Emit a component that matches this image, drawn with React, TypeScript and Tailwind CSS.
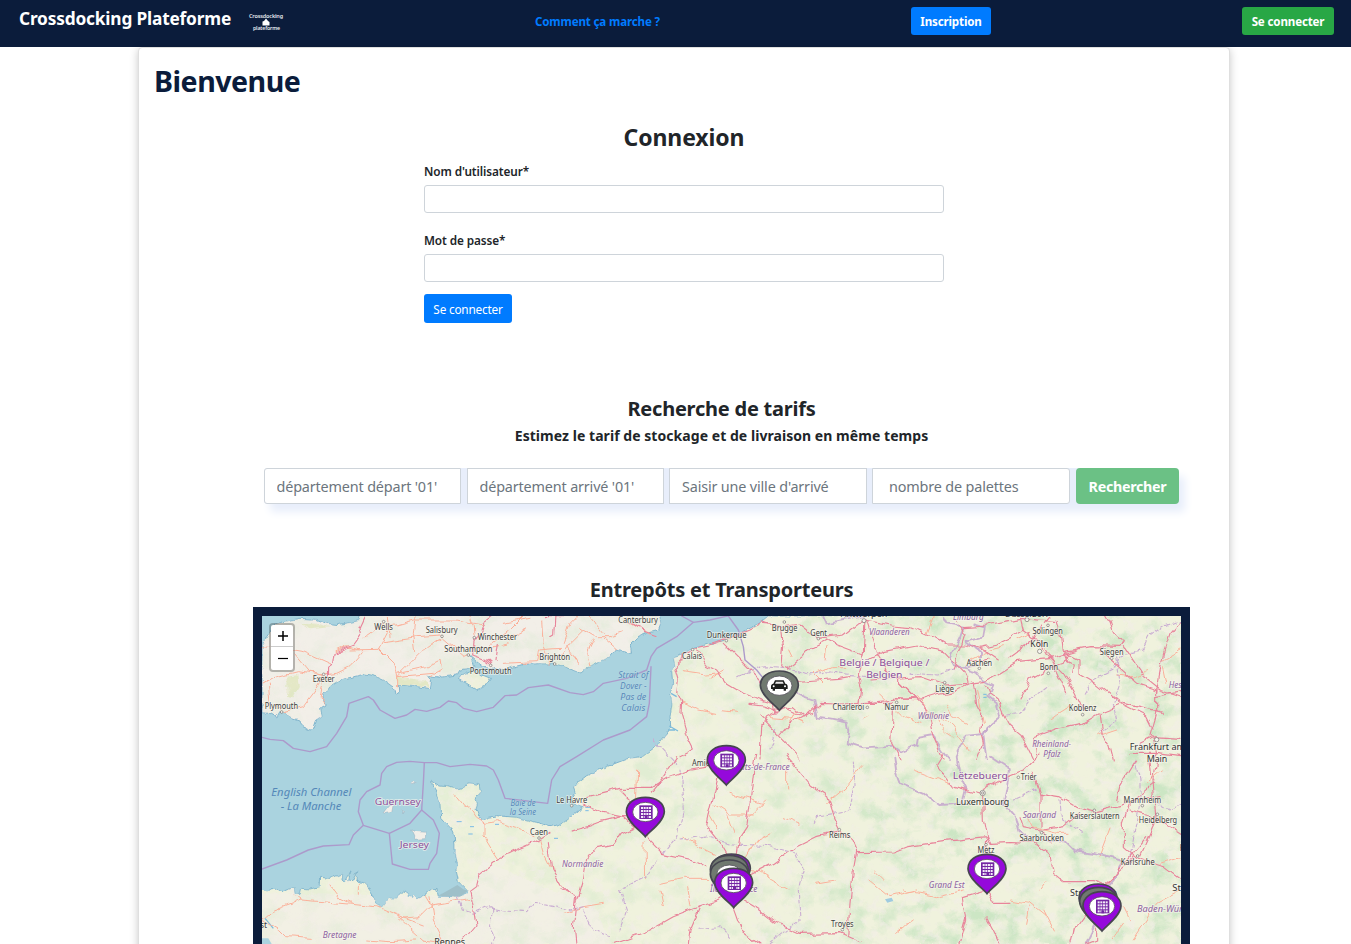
import React from "react";

const UK =
  "M36 225L60 190 78 160 110 153 150 145 200 148 230 160 262 164 300 158 326 152 330 138H1230L1232 160 1225 180 1190 190 1160 205 1140 225 1145 250 1096 240 1080 260 1050 275 1020 290 1005 296 990 309 960 297 930 285 905 282 870 281 820 283 780 294 740 300 722 296 700 290 680 275 660 257 672 290 650 296 630 300 620 315 570 322 545 318 530 322 545 330 541 356 510 351 445 345 446 372 438 375 435 355 400 330 370 316 345 312 290 325 270 332 240 350 228 368 218 372 225 405 212 412 216 440 200 450 190 478 180 480 155 468 147 450 120 441 104 428 90 424 80 442 60 430 36 428Z";
const WIGHT = "M622 325L645 310 665 303 690 312 722 325 705 350 680 359 650 340Z";
const CONTINENT =
  "M1555 138L1520 165 1460 195 1410 212 1365 226 1330 235 1300 250 1270 265 1275 290 1265 305 1268 340 1262 370 1266 400 1260 440 1262 465 1252 492 1230 520 1180 558 1130 567 1070 590 1010 617 980 640 970 652 976 670 964 687 966 700 1000 714 985 722 960 742 930 763 900 770 860 757 800 742 740 737 715 742 700 752 684 735 678 717 682 700 675 682 690 662 688 645 670 640 650 639 640 652 620 657 590 650 570 648 545 634 548 650 560 660 558 672 570 700 572 742 600 772 613 800 616 850 622 882 618 900 625 932 655 962 640 975 600 980 565 979 560 955 545 957 520 977 500 987 490 975 485 987 470 960 458 965 440 985 418 985 395 1012 375 998 372 980 345 940 318 930 320 905 306 932 296 930 303 902 284 937 276 930 278 910 262 917 240 925 212 922 210 950 180 957 155 955 150 975 135 972 132 952 100 965 80 957 60 960 36 967V1122H2793V138Z";

const PINK = [
  // south England
  "M345 138L330 170 335 190 310 225 255 250 250 285 236 295 235 325",
  "M730 138L700 160 690 190 672 215 668 255 710 270 722 280",
  "M918 138L914 195 905 200M890 140H940",
  "M742 225L735 275",
  "M1130 145L1180 180 1225 195",
  // Calais, Lille and Belgium
  "M1330 240L1300 255 1295 275 1275 295 1285 330 1280 370 1292 395 1290 430 1310 500 1330 540 1290 560",
  "M1340 240L1370 285 1400 300 1430 340 1480 370 1530 390 1600 410 1640 430 1665 445",
  "M1330 235L1380 225 1440 205 1500 180 1540 160 1590 165 1598 230 1592 290 1610 300",
  "M1420 220L1450 250 1500 300 1530 330 1570 400 1575 430",
  "M1540 155L1590 175 1650 165 1700 205 1780 195 1830 155 1840 152",
  "M1610 300L1660 260 1680 235 1730 210 1760 225 1840 255M1630 335L1700 330 1770 325 1800 320",
  "M1590 420L1630 410 1665 440 1710 400 1760 402 1850 400 1930 400",
  "M1590 420L1550 440 1535 465 1530 570M1530 440L1560 470 1590 500 1640 550 1650 570",
  "M1590 495L1620 460 1660 438 1690 430 1695 405M1500 400L1540 405 1585 420",
  // Antwerp, Brussels and Namur
  "M1845 150L1840 250 1825 310 1835 360 1830 400M1850 155L1880 250 1910 300 1995 385 1850 398",
  "M1840 150L1925 165 1985 170 2050 200 2090 225 2150 225 2200 240 2245 270",
  "M1860 265L1900 245 2000 225 2080 245 2150 320 2155 340",
  "M1860 330L2010 320 2080 345 2155 340 2205 335 2260 300 2300 275 2400 265 2480 240",
  "M1930 385L2010 390 2060 375 2110 365 2170 335",
  "M1910 300L1960 350 2030 420 2050 500 2080 570",
  "M2170 340L2180 400 2195 430 2190 480 2200 520 2180 570",
  "M2210 345L2220 370 2245 390 2260 430 2280 465 2310 490 2330 530 2350 570",
  "M1930 420L1925 520 1950 570",
  // Aachen and Rhineland
  "M2140 170L2210 165 2310 145 2420 155M2310 140L2320 180 2360 210 2390 260 2440 310 2470 360 2490 400 2500 430",
  "M2195 235L2240 225 2270 210 2320 180M2160 275L2220 265M2120 150L2145 190 2120 270 2110 300",
  "M2420 150L2435 200 2440 245 2520 230 2610 232 2620 215 2590 185 2580 155 2570 138",
  "M2380 160L2400 138M2370 170L2350 210 2280 260M2440 245L2460 255 2490 270 2490 310 2540 340 2620 405 2690 440 2710 480",
  "M2450 250L2440 280 2410 290 2340 330 2310 390M2440 250L2450 275 2470 285 2465 310",
  "M2450 365L2420 300 2370 210M2550 430L2500 460 2420 475 2350 500 2360 555",
  "M2550 430L2560 500 2580 530 2590 570M2555 425L2620 400 2740 430",
  "M2620 230L2680 320 2730 360 2790 380 2830 410 2860 450",
  "M2550 240L2600 285 2660 340 2720 360 2720 430 2700 500",
  "M2720 365L2740 250 2760 190 2793 150M2720 380L2793 365",
  "M2670 520L2710 500 2790 505M2640 550L2720 550 2793 560M2705 500L2720 550 2710 570",
  // Normandy and Picardy
  "M900 790L860 815 800 840 740 870 690 910 680 950 660 965 670 1010 678 1065 640 1110",
  "M895 818L905 900 930 940 960 970",
  "M960 785L1010 770 1050 755 1110 740 1130 740 1200 750",
  "M1010 680L1110 655 1200 655 1250 625 1320 600 1380 590 1450 540",
  "M1000 705L1060 730 1120 742 1150 770 1110 790 1090 820 1040 830 1010 870 1000 930 980 1000",
  "M1200 670L1240 620 1280 560M1110 660L1140 690 1170 710",
  "M1190 800L1240 850 1330 870 1370 890",
  "M1410 595L1395 660 1380 720 1370 770 1410 820 1440 870",
  "M1520 552L1510 610 1500 700 1490 770 1470 800 1460 860",
  "M1610 560L1680 645 1730 680 1750 740 1770 782",
  "M1500 915L1570 880 1640 830 1700 800 1770 782",
  "M1770 782L1800 800 1820 845 1810 900 1800 1000 1793 1100",
  "M1450 975L1350 1010 1270 1040 1200 1080 1090 1120",
  "M1450 1010L1475 1080 1530 1122M1480 990L1530 1020 1580 1060 1650 1090 1770 1088 1830 1115",
  "M1350 1010L1320 1080 1315 1122M930 950L980 980 970 1070 975 1122",
  "M1820 848L1930 846 1970 830 2080 815 2210 800 2220 820 2280 818",
  // Luxembourg, Lorraine and Alsace
  "M2198 675L2200 750 2210 800 2208 850M2198 675L2110 650 2060 585 2080 552",
  "M2200 660L2270 620 2320 600 2370 552M2350 610L2370 670 2370 770",
  "M2370 670L2430 680 2480 710 2540 725 2630 700 2730 680",
  "M2280 818L2350 820 2400 850 2410 910 2440 935 2530 935 2570 950",
  "M2380 780L2440 770 2490 730M2310 740L2320 770 2370 780 2410 820",
  "M2208 960L2230 1000 2280 1000M2208 960L2140 980 2150 1050 2130 1122",
  "M2208 1040L2230 1080 2250 1122",
  "M2550 970L2590 925 2640 860 2690 800M2540 980L2520 1010 2470 1080 2460 1122",
  "M2540 1020L2540 1110 2510 1122M2560 950L2630 890 2650 860",
  "M2720 570L2710 640 2640 700 2620 760 2620 830 2660 865M2700 570L2710 680 2720 750 2670 860",
  "M2660 570L2610 650 2600 690M2640 720L2700 735 2793 795M2665 865L2740 890 2793 930",
];

const ORANGE = [
  "M36 230L100 235 160 245 250 285M130 250L180 310 220 315M36 345L80 320 140 305 220 315 260 310 300 290 340 245",
  "M55 345L60 390 90 420M220 320L190 370 160 410 100 425M220 330L210 390 220 405",
  "M300 240L385 238 420 170 490 150 570 150 620 150 700 165M255 245L290 230 330 240",
  "M385 235L430 280 440 320 440 350M400 215L500 200 575 195M575 205L640 260 650 255",
  "M495 140L490 190 497 245M440 310L530 290 570 270 575 300 540 320",
  "M345 200L400 160M415 140L420 200M440 320L520 240 570 205M440 320L550 310",
  "M660 138L670 170 672 200M700 240L770 225 790 200 830 180M760 160L840 145M720 225L780 180 820 140",
  "M760 280L860 275 865 240 930 235M875 150L880 230 900 280M940 220L960 160 980 140M950 230L985 280",
  "M990 170L1040 200 1080 200 1120 185M1020 138L1060 190M1060 205L1100 240M1130 150L1200 190",
  "M1000 180L960 220 930 260M1030 210L1010 250 1020 290",
  "M1300 305L1370 315 1420 310M1380 325L1420 300M1290 395L1350 420 1400 430",
  "M1560 440L1630 445 1660 460M1640 420L1620 460M1420 425L1460 430",
  "M1700 310L1740 290 1790 290M1890 370L1960 440 2010 460M1840 450L1850 440M2000 380L2040 430 2100 460 2160 540",
  "M2090 400L2110 440 2150 460M2050 430L2080 480 2110 500M2030 190L2050 140M2180 360L2200 460",
  "M2160 270L2220 240 2260 230M2340 190L2300 210M2460 410L2420 435 2400 450M2540 500L2600 480",
  "M2600 315L2650 320 2690 305M2740 270L2793 240M2740 290L2750 340",
  "M1395 705L1440 735 1510 735M1440 670L1540 700M1430 735L1450 790M1380 735L1400 770",
  "M1160 600L1155 730M1185 820L1187 930M1300 800L1350 830 1390 850M1230 940L1300 925 1370 925",
  "M1230 960L1240 1010M945 1030L1000 1010 1060 1000M1310 950L1320 1010",
  "M1490 860L1520 810 1560 790M1500 890L1620 960M1730 700L1790 650 1835 590M1610 600L1610 660",
  "M1500 740L1550 690M1600 740L1650 760M1700 940L1760 930M1690 310L1720 340M1610 240L1620 260M1730 230L1725 270",
  "M615 673L640 705 655 710 680 745 705 760 705 800 735 850 745 865",
  "M705 760L740 755 800 775 855 800M870 812L880 850 900 890 910 900M540 980L550 1050 580 1110",
  "M135 975L155 990 250 998 380 1010 450 1040 520 1065M36 1050L70 1020 150 990",
  "M36 1050L90 1080 110 1100 190 1105M240 945L270 985 300 1000M530 980L545 1005 660 985M545 1005L510 1040 450 1045",
  "M325 945V970M350 1110L420 1115 500 1110M520 1110L590 1120M450 1045L470 1065 520 1110",
  "M1860 930L1920 980 2000 960M1940 1090L1990 1050M2280 990L2340 1000 2390 1040M2380 1020L2410 1080",
  "M2140 960L2060 980 1960 960M2340 1010L2330 1060M2390 935L2370 960M2620 1010L2640 1050",
  "M1870 900L1900 930M2100 640L1990 600M2690 640L2740 600M2580 780L2550 860M2793 860L2730 880",
  "M2650 1110L2690 1050 2720 1000 2793 960M2590 1100L2620 1060M2330 730L2350 770 2420 790 2460 790",
];

// Maritime boundaries, then land boundaries.
const SEA_BORDERS = [
  "M36 502L60 508 100 512 130 535 180 545 230 530 260 490 290 440 297 400 355 380 370 390 390 420 435 445 470 435 495 418 530 424 570 412 595 393 620 398 640 415 680 425 730 412 765 377 800 375 835 353 895 345 960 368 1000 374 1030 365 1060 340 1130 325 1190 300 1203 260 1220 235 1280 200 1330 157 1380 150 1432 138",
  "M1203 290L1198 400 1190 440 1140 480 1060 510 980 560 930 590 905 630 893 700 765 685 745 630 730 600 710 588 660 583 600 590 560 578 523 578",
  "M36 897L110 870 175 840 220 828 297 824 310 795 340 766 325 725 330 690 350 665 390 645 395 610 410 590 440 577 480 574 523 578 520 640 515 720 480 760 418 790 340 766",
  "M418 790L427 882 480 898 535 898 540 880 560 850 568 790 550 750 515 720",
  "M1435 138L1465 180 1480 230 1485 270 1520 300 1540 325",
  "M1295 138L1330 157",
];
const LAND_BORDERS = [
  "M1540 325L1600 310 1630 330 1640 370 1660 380 1690 390 1700 440 1740 445 1790 455 1795 480 1790 520 1840 535 1930 530 1950 545 2000 525 2005 500 2050 492 2060 515 2080 545 2100 570",
  "M1720 138L1730 160 1780 150 1840 138M2080 138L2090 160 2140 170 2130 200 2100 260 2105 285 2180 305 2200 330 2230 345 2215 380 2240 400 2250 440 2210 470 2200 500 2210 570",
  "M2170 160L2205 170 2200 200 2150 215 2190 245 2190 280 2140 290",
  "M2210 470L2200 495 2150 500 2120 560 2130 620 2150 660 2140 700 2065 705 2020 670 1950 640 1935 600 1930 560",
  "M2220 560L2280 600 2270 650 2260 700 2295 740 2305 780 2330 800 2390 815 2440 810 2470 840 2540 850 2620 870",
  "M2620 870L2600 920 2550 980 2540 1060 2510 1122",
];

const DASHED = [
  "M625 980L640 1020 670 1030 720 1010 760 1020 830 1025 850 1000 890 1005 960 1020 1000 1010",
  "M725 1010V1122M1000 1020L1030 1080 1080 1100M1290 600L1300 720 1280 800 1240 850",
  "M1290 810L1380 800 1450 825 1560 830 1640 850 1660 900 1645 960 1650 1050 1600 1090 1560 1122",
  "M1690 760L1700 740 1800 720 1815 640 1810 570M1500 300L1460 320 1540 290 1640 300 1680 315 1730 305 1850 320",
  "M1220 870L1190 920 1110 960 1130 1020 1110 1080M1350 1075L1410 1070 1440 1100",
  "M2793 150L2740 170 2700 200 2680 240 2610 260 2590 300 2530 330 2500 380M2600 260L2610 340 2590 400 2600 450 2550 490",
  "M2270 435L2310 430 2350 380 2390 350M2360 660L2290 690M2430 690L2435 750 2500 790",
  "M2655 570L2670 630 2670 700 2640 860M2720 700L2760 720 2793 700M1580 480L1560 540",
  "M1980 310L2060 315 2110 300M1210 510L1280 580",
];

type Label = [string, number, number, number, ("place" | "big" | "region" | "country" | "sea")?];
// text, centre x, baseline y, width, kind
const LABELS: Label[] = [
  ["Wells", 401, 179, 56],
  ["Salisbury", 575, 190, 96],
  ["Winchester", 742, 210, 118],
  ["Southampton", 655, 246, 144],
  ["Portsmouth", 722, 312, 125],
  ["Brighton", 914, 271, 92],
  ["Exeter", 221, 337, 66],
  ["Plymouth", 94, 417, 100],
  ["Canterbury", 1164, 158, 119],
  ["Dunkerque", 1430, 203, 119],
  ["Calais", 1326, 266, 60],
  ["Brugge", 1604, 182, 77],
  ["Gent", 1706, 197, 50],
  ["Antwerpen", 1842, 142, 140, "big"],
  ["Charleroi", 1795, 421, 95],
  ["Namur", 1940, 421, 73],
  ["Liège", 2084, 365, 56],
  ["Aachen", 2188, 287, 77],
  ["Düsseldorf", 2330, 142, 130, "big"],
  ["Solingen", 2393, 193, 91],
  ["Köln", 2368, 231, 54, "big"],
  ["Bonn", 2397, 300, 55],
  ["Siegen", 2585, 255, 71],
  ["Koblenz", 2498, 423, 83],
  ["Frankfurt am", 2722, 539, 166, "big"],
  ["Main", 2721, 575, 62, "big"],
  ["Vlaanderen", 1918, 195, 122, "region"],
  ["Limburg", 2155, 151, 92, "region"],
  ["Wallonie", 2050, 447, 94, "region"],
  ["Rheinland-", 2405, 530, 117, "region"],
  ["Pfalz", 2406, 562, 52, "region"],
  ["Hessen", 2794, 355, 76, "region"],
  ["België / Belgique /", 1903, 288, 270, "country"],
  ["Belgien", 1903, 325, 109, "country"],
  ["Strait of", 1150, 325, 91, "sea"],
  ["Dover -", 1150, 358, 80, "sea"],
  ["Pas de", 1150, 391, 78, "sea"],
  ["Calais", 1150, 423, 72, "sea"],
  ["Guernsey", 443, 704, 138, "country"],
  ["Jersey", 493, 835, 88, "country"],
  ["Baie de", 819, 708, 75, "sea"],
  ["la Seine", 819, 735, 79, "sea"],
  ["Le Havre", 965, 698, 93],
  ["Caen", 867, 795, 54],
  ["Rennes", 599, 1124, 93, "big"],
  ["Brest", 20, 1075, 62],
  ["Bretagne", 269, 1103, 101, "region"],
  ["Normandie", 998, 890, 124, "region"],
  ["Amiens", 1365, 588, 78],
  ["Hauts-de-France", 1529, 600, 180, "region"],
  ["Reims", 1769, 805, 64],
  ["Troyes", 1777, 1070, 68],
  ["Île-de-France", 1451, 965, 142, "region"],
  ["Lëtzebuerg", 2191, 628, 165, "country"],
  ["Luxembourg", 2198, 705, 160, "big"],
  ["Trier", 2336, 630, 47],
  ["Saarland", 2368, 743, 100, "region"],
  ["Kaiserslautern", 2534, 746, 150],
  ["Saarbrücken", 2375, 814, 133],
  ["Mannheim", 2677, 698, 113],
  ["Heidelberg", 2724, 759, 115],
  ["Karlsruhe", 2663, 884, 102],
  ["Metz", 2208, 848, 51],
  ["Grand Est", 2090, 954, 107, "region"],
  ["Strasbourg", 2530, 979, 140, "big"],
  ["Baden-Württemberg", 2786, 1026, 250, "region"],
  ["Stuttgart", 2826, 962, 118, "big"],
  ["Heilbronn", 2838, 843, 98],
];

const DOTS: [number, number][] = [
  [401, 155], [576, 199], [673, 203], [655, 255], [722, 286], [914, 282], [221, 313], [95, 426],
  [1328, 239], [1429, 212], [1603, 156], [1705, 206], [1852, 412], [1940, 397], [2084, 338], [2188, 295],
  [2394, 166], [2395, 310], [2585, 265], [2498, 434], [965, 707], [867, 804], [1768, 779], [1777, 1079],
  [2305, 622], [2533, 721], [2375, 788], [2677, 707], [2722, 733], [2663, 858], [2208, 824],
];

const SIZES = { place: 24, big: 26, region: 24, country: 29, sea: 25 };
const FILLS = { place: "#3c3c3c", big: "#333333", region: "#8d62a0", country: "#8c4f9b", sea: "#5488b9" };

function MapLabel({ item }: { item: Label }) {
  const [text, x, y, width, kind = "place"] = item;
  return (
    <text
      x={x - width / 2}
      y={y}
      textLength={width}
      lengthAdjust="spacingAndGlyphs"
      fontSize={SIZES[kind]}
      fontStyle={kind === "region" || kind === "sea" ? "italic" : "normal"}
      fill={FILLS[kind]}
      stroke={kind === "sea" ? "#c5dfe8" : "#f7f6ee"}
      strokeWidth={kind === "sea" ? 2 : 5}
      strokeOpacity={0.7}
      paintOrder="stroke"
    >
      {text}
    </text>
  );
}

function Pin({ x, y, gray = false }: { x: number; y: number; gray?: boolean }) {
  return (
    <g transform={`translate(${x} ${y})`}>
      <path
        d="M0 -2C-10 -16 -56 -46 -57 -77C-57 -103 -32 -120 0 -120C32 -120 57 -103 57 -77C56 -46 10 -16 0 -2Z"
        fill={gray ? "#707970" : "#9509db"}
        stroke="#464650"
        strokeWidth="5"
      />
      <ellipse cx="0" cy="-76" rx="38" ry="29" fill="#fff" stroke="#55505c" strokeWidth="2.5" />
      {gray ? (
        <g fill="#1c1e1c">
          <path d="M-13 -92H13L18 -82C23 -81 25 -78 25 -74V-66H20V-61H13V-66H-13V-61H-20V-66H-25V-74C-25 -78 -23 -81 -18 -82Z" />
          <path d="M-10 -88H10L13 -82H-13Z" fill="#e9e9e9" />
          <circle cx="-17" cy="-74" r="3" fill="#fff" />
          <circle cx="17" cy="-74" r="3" fill="#fff" />
        </g>
      ) : (
        <g>
          <rect x="-18" y="-96" width="40" height="41" fill="#7426a3" />
          <g fill="#f2e9f8">
            {[-91, -82, -73, -64].map((wy) =>
              [-13, -5, 3, 11].map((wx) => <rect key={`${wx}${wy}`} x={wx} y={wy} width="6" height="6" />),
            )}
          </g>
          <rect x="-2" y="-64" width="9" height="9" fill="#7426a3" />
        </g>
      )}
    </g>
  );
}

function RegionMap() {
  return (
    <svg className="block h-[328px] w-[919px]" viewBox="36 138 2757 984" preserveAspectRatio="none" fontFamily="'Noto Sans', sans-serif">
      <defs>
        <clipPath id="land">
          <path d={UK} />
          <path d={WIGHT} />
          <path d={CONTINENT} />
        </clipPath>
        <filter id="woods" x="0" y="0" width="100%" height="100%" colorInterpolationFilters="sRGB">
          <feTurbulence type="fractalNoise" baseFrequency="0.013 0.016" numOctaves="6" seed="8" />
          <feColorMatrix values="0 0 0 0 0.80  0 0 0 0 0.90  0 0 0 0 0.77  3.2 0 0 0 -1.45" />
        </filter>
        <filter id="towns" x="0" y="0" width="100%" height="100%" colorInterpolationFilters="sRGB">
          <feTurbulence type="fractalNoise" baseFrequency="0.035" numOctaves="4" seed="31" />
          <feColorMatrix values="0 0 0 0 0.95  0 0 0 0 0.93  0 0 0 0 0.91  4 0 0 0 -2" />
        </filter>
        <filter id="rough" filterUnits="userSpaceOnUse" x="0" y="100" width="2830" height="1060" colorInterpolationFilters="sRGB">
          <feTurbulence type="fractalNoise" baseFrequency="0.025" numOctaves="2" seed="4" />
          <feDisplacementMap in="SourceGraphic" scale="24" xChannelSelector="R" yChannelSelector="G" />
        </filter>
        <filter id="coast" filterUnits="userSpaceOnUse" x="0" y="100" width="2830" height="1060" colorInterpolationFilters="sRGB">
          <feTurbulence type="fractalNoise" baseFrequency="0.05" numOctaves="2" seed="12" />
          <feDisplacementMap in="SourceGraphic" scale="15" xChannelSelector="R" yChannelSelector="G" />
        </filter>
        <linearGradient id="east" x1="0" x2="1" y1="0" y2="0">
          <stop offset="0.05" stopColor="#fff" stopOpacity="0.22" />
          <stop offset="0.5" stopColor="#fff" stopOpacity="0.45" />
          <stop offset="0.75" stopColor="#fff" stopOpacity="1" />
        </linearGradient>
        <mask id="eastMask">
          <rect x="36" y="138" width="2757" height="984" fill="url(#east)" />
        </mask>
      </defs>
      <rect x="36" y="138" width="2757" height="984" fill="#aad3df" />
      <g filter="url(#coast)">
        <g strokeLinejoin="round">
          <path d={CONTINENT} fill="#f0f2dd" stroke="#7fb4cd" strokeWidth="3" />
          <path d="M1540 138V110H2820V1150H10V960H50V1100H2780V150Z" fill="#f0f2dd" />
          <path d={UK} fill="#f2efe8" stroke="#7fb4cd" strokeWidth="3" />
          <path d="M332 110H1228V150H332Z" fill="#f2efe8" />
          <path d={WIGHT} fill="#eff1dc" stroke="#7fb4cd" strokeWidth="3" />
          <path d="M400 728L415 708 430 703 425 728 405 730ZM482 780L500 785 528 787 526 806 495 808ZM485 638L495 631 500 636 488 641ZM455 720L460 723 459 732Z" fill="#f2efe9" stroke="#9ab" strokeWidth="1.5" />
        </g>
        <g clipPath="url(#land)">
          <path d="M1030 990L900 960 700 870 640 980 36 970V1122H1080Z" fill="#f2efe6" opacity=".8" />
          <path d="M110 320L145 315 150 350 130 385 108 380ZM150 165L200 160 240 172 180 178ZM440 320L520 330 540 350 445 345Z" fill="#e4e8c6" />
          <g mask="url(#eastMask)">
            <rect x="36" y="138" width="2757" height="984" filter="url(#woods)" />
          </g>
          <rect x="36" y="138" width="2757" height="984" filter="url(#towns)" opacity=".6" />
        </g>
      </g>
      <path d="M565 977L600 958 622 945 640 958 655 962 630 980Z" fill="#9fc0c9" />
      <path d="M36 1105L55 1105 65 1122H36Z" fill="#aad3df" />
      <path d="M45 1045L70 1075M1263 370L1280 380M1258 468L1284 483M1255 480L1275 480" stroke="#7dbcdb" strokeWidth="4" fill="none" />
      <path d="M620 755H635M660 770H672M655 792H668M735 763H747M912 805H924M1006 712H1020M1006 722H1016M2200 373H2210M2200 382H2210" stroke="#62aee8" strokeWidth="2.5" />
      <path d="M1905 988L1925 983 1930 993 1912 998Z" fill="#9fcbe0" />
      <g fill="none" strokeLinejoin="round" strokeLinecap="round">
        <g stroke="#fbb09a" strokeWidth="3" filter="url(#rough)">
          {ORANGE.map((d) => <path key={d} d={d} />)}
        </g>
        <g stroke="#c9acd2" strokeWidth="3.2" strokeDasharray="11 7" filter="url(#rough)">
          {DASHED.map((d) => <path key={d} d={d} />)}
        </g>
        <g stroke="#ac9acb" strokeWidth="4.2">
          {SEA_BORDERS.map((d) => <path key={d} d={d} />)}
        </g>
        <g stroke="#c5a9cd" strokeWidth="5.5" strokeOpacity=".9" filter="url(#rough)">
          {LAND_BORDERS.map((d) => <path key={d} d={d} />)}
        </g>
        <g stroke="#e8849a" strokeWidth="3.4" filter="url(#rough)">
          {PINK.map((d) => <path key={d} d={d} />)}
        </g>
      </g>
      <g fill="#f6f4ee" stroke="#77736f" strokeWidth="2">
        {DOTS.map(([x, y]) => <circle key={`${x}-${y}`} cx={x} cy={y} r="4" />)}
        <circle cx="1842" cy="152" r="6" />
        <circle cx="2331" cy="149" r="6" />
        <circle cx="2369" cy="244" r="6.5" />
        <circle cx="2720" cy="509" r="6.5" />
        <circle cx="2198" cy="669" r="8" />
        <circle cx="2198" cy="669" r="3.5" />
      </g>
      {LABELS.map((item) => <MapLabel key={`${item[0]}${item[1]}`} item={item} />)}
      <g fill="#5488b9" fontSize="32" fontStyle="italic">
        <text x="64" y="678" textLength="240" lengthAdjust="spacingAndGlyphs">English Channel</text>
        <text x="92" y="719" textLength="182" lengthAdjust="spacingAndGlyphs">- La Manche</text>
      </g>
      <Pin x={1588} y={423} gray />
      <Pin x={1429} y={647} />
      <Pin x={1186} y={802} />
      <Pin x={1444} y={972} />
      <Pin x={1438} y={976} gray />
      <Pin x={1438} y={990} gray />
      <Pin x={1451} y={1015} />
      <Pin x={2211} y={973} />
      <Pin x={2544} y={1062} />
      <Pin x={2546} y={1072} gray />
      <Pin x={2556} y={1085} />
    </svg>
  );
}

function Logo() {
  return (
    <svg className="ml-[16px] mt-[11px] h-[22px] w-[36px]" viewBox="0 0 36 22" fontFamily="'Noto Sans', sans-serif" fill="#e6e9ef">
      <text x="1" y="7.3" fontSize="6" fontWeight="600" textLength="34" lengthAdjust="spacingAndGlyphs">Crossdocking</text>
      <text x="5" y="18.7" fontSize="5.4" fontWeight="600" textLength="27" lengthAdjust="spacingAndGlyphs">plateforme</text>
      <path d="M14.5 14.5V10.5L16 10 18 7.5 20 10 21.5 11V14.5Z" fill="#fff" />
    </svg>
  );
}

const FIELDS = [
  { text: "département départ '01'", box: "w-[197px] mr-[6px] rounded-l-[3px] pl-[11.5px]" },
  { text: "département arrivé '01'", box: "w-[197px] mr-[5px] pl-[11.5px]" },
  { text: "Saisir une ville d'arrivé", box: "w-[198px] mr-[5px] pl-[12px]" },
  { text: "nombre de palettes", box: "w-[198px] mr-[6px] rounded-r-[3px] pl-[16px]" },
];

export default function App() {
  return (
    <div className="h-[944px] w-[1351px] overflow-hidden bg-white font-['Noto_Sans',sans-serif] text-[#212529]">
      <header className="flex h-[47px] items-start bg-[#0b1c3b] text-[11.6px] font-bold leading-[28px] tracking-[-0.16px] text-white">
        <a className="ml-[19px] mt-[5px] w-[213px] whitespace-nowrap text-[17.3px] font-bold tracking-[-0.18px]">Crossdocking Plateforme</a>
        <Logo />
        <a className="ml-[251px] mt-[8px] w-[126px] whitespace-nowrap text-[#007bff]">Comment ça marche ?</a>
        <button className="ml-[250px] mt-[7px] h-[28px] w-[80px] whitespace-nowrap rounded-[3px] bg-[#007bff] pt-px">Inscription</button>
        <button className="ml-[251px] mt-[7px] h-[28px] w-[92px] whitespace-nowrap rounded-[3px] bg-[#28a745] pt-px">Se connecter</button>
      </header>

      <main className="ml-[138px] h-[1000px] w-[1092px] rounded-[4px] border border-[#dfdfdf] bg-white pt-[13px] shadow-[0_2px_8px_rgba(0,0,0,0.22)]">
        <h1 className="ml-[15px] h-[40px] whitespace-nowrap text-[28.6px] font-bold leading-[40px] tracking-[-0.5px] text-[#0b1c3b]">Bienvenue</h1>

        <section className="ml-[285px] mt-[20px] w-[520px]">
          <h2 className="text-center text-[23px] font-bold leading-[32px] tracking-[-0.1px]">Connexion</h2>
          <label className="mt-[9px] block h-[18px] text-[11.8px] font-semibold leading-[18px] tracking-[-0.1px]">Nom d'utilisateur*</label>
          <input className="mt-[5px] block h-[28px] w-full rounded-[3px] border border-[#ced4da] px-2 outline-none" />
          <label className="mt-[18px] block h-[18px] text-[11.8px] font-semibold leading-[18px] tracking-[-0.1px]">Mot de passe*</label>
          <input type="password" className="mt-[5px] block h-[28px] w-full rounded-[3px] border border-[#ced4da] px-2 outline-none" />
          <button className="mt-[12px] block h-[29px] w-[88px] whitespace-nowrap rounded-[3px] bg-[#007bff] pt-[2px] text-[11.8px] leading-[27px] tracking-[-0.2px] text-white">Se connecter</button>
        </section>

        <section className="ml-[125px] mt-[72px] w-[915px]">
          <div className="text-center">
            <h3 className="text-[20px] font-bold leading-[28px] tracking-[-0.23px]">Recherche de tarifs</h3>
            <p className="mt-[2px] text-[14px] font-bold leading-[22px] tracking-[0.05px]">Estimez le tarif de stockage et de livraison en même temps</p>
          </div>
          <div className="mt-[21px] flex h-[36px] rounded-[4px] bg-[#e8eefb] shadow-[6px_8px_9px_#e8eefb]">
            {FIELDS.map((f) => (
              <input key={f.text} placeholder={f.text} className={`h-[36px] border border-[#ced4da] bg-white text-[14.4px] tracking-[-0.16px] outline-none placeholder:text-[#6c757d] ${f.box}`} />
            ))}
            <button className="h-[36px] w-[103px] whitespace-nowrap rounded-[4px] bg-[#6bc185] pt-px text-[14.3px] font-bold tracking-[-0.3px] text-white">Rechercher</button>
          </div>
        </section>

        <section className="ml-[114px] mt-[72px] w-[937px]">
          <h3 className="text-center text-[20px] font-bold leading-[28px] tracking-[-0.21px]">Entrepôts et Transporteurs</h3>
          <div className="relative mt-[3px] border-[9px] border-[#0b1c3b]">
            <RegionMap />
            <div className="absolute left-[7px] top-[7px] w-[26px] rounded-[4px] border-2 border-black/25 bg-white bg-clip-padding">
              <button className="flex h-[22px] w-full items-center justify-center border-b border-[#ccc] pl-px pt-px" aria-label="Zoom in">
                <svg className="size-[10px]" viewBox="0 0 10 10"><path d="M0 5H10M5 0V10" stroke="#000" strokeWidth="1.5" /></svg>
              </button>
              <button className="flex h-[23px] w-full items-center justify-center pl-px" aria-label="Zoom out">
                <svg className="size-[10px]" viewBox="0 0 10 10"><path d="M0 4.5H10" stroke="#000" strokeWidth="1.2" /></svg>
              </button>
            </div>
          </div>
        </section>
      </main>
    </div>
  );
}
